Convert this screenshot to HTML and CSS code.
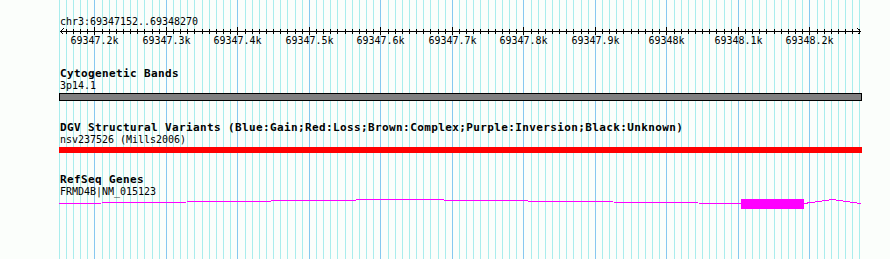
FILE: index.html
```html
<!DOCTYPE html>
<html lang="en">
<head>
  <meta charset="UTF-8">
  <title>chr3:69347152..69348270</title>
  <link rel="stylesheet" href="styles.css">
</head>
<body>

  <div class="view">
    <!-- grid behind every track -->
    <svg class="grid" id="grid" width="890" height="259"></svg>

    <div class="tracks">
      <div class="locus">chr3:69347152..69348270</div>
      <svg class="ruler" id="ruler" width="890" height="19"></svg>

      <div class="track">
        <div class="track-title">Cytogenetic Bands</div>
        <div class="feature-label">3p14.1</div>
        <div class="band"></div>
      </div>

      <div class="track">
        <div class="track-title">DGV Structural Variants (Blue:Gain;Red:Loss;Brown:Complex;Purple:Inversion;Black:Unknown)</div>
        <div class="feature-label">nsv237526 (Mills2006)</div>
        <div class="variant loss"></div>
      </div>

      <div class="track">
        <div class="track-title">RefSeq Genes</div>
        <div class="feature-label">FRMD4B|NM_015123</div>
        <svg class="gene" width="890" height="12">
          <polyline class="intron" points="59,5.5 400,1.5 741,5.5"></polyline>
          <rect class="exon" x="741" y="1" width="63" height="10"></rect>
          <polyline class="intron" points="804,5.5 832.5,1.5 861,5.5"></polyline>
        </svg>
      </div>
    </div>
  </div>

  <script src="script.js"></script>
</body>
</html>
```

FILE: styles.css
```css
/* Colores de la vista */
:root {
  --bg: #fbfefb;
  --grid-minor: #a9eded;
  --grid-major: #86c8f0;
  --band-fill: #808080;
  --loss: #ff0000;
  --gene: #ff00ff;
}

body {
  margin: 0;
  padding: 0;
  background-color: var(--bg);
  color: #000;
  font-family: "DejaVu Sans Mono", "Liberation Mono", monospace;
}

.view {
  position: relative;
  width: 890px;
  height: 259px;
  overflow: hidden;
}

/* Rejilla de fondo */
.grid {
  position: absolute;
  top: 0;
  left: 0;
  z-index: 0;
}

.grid .minor {
  fill: var(--grid-minor);
}

.grid .major {
  fill: var(--grid-major);
}

.tracks {
  position: relative;
  z-index: 1;
  padding-top: 16px;
}

.locus,
.feature-label {
  padding-left: 60px;
  font-size: 10px;
  line-height: 12px;
  letter-spacing: -0.02px;
  white-space: nowrap;
}

/* Regla con marcas */
.ruler {
  display: block;
  overflow: visible;
}

.ruler rect {
  fill: #000;
}

.ruler text {
  font-family: "DejaVu Sans Mono", "Liberation Mono", monospace;
  font-size: 10px;
  fill: #000;
  text-anchor: middle;
}

.track {
  margin-top: 21px;
}

.track-title {
  padding-left: 60px;
  font-size: 11px;
  font-weight: bold;
  line-height: 12px;
  letter-spacing: 0.38px;
  white-space: nowrap;
}

.band {
  box-sizing: border-box;
  margin: 1px 0 0 59px;
  width: 803px;
  height: 8px;
  background-color: var(--band-fill);
  border: 1px solid #000;
}

.variant {
  margin: 1px 0 0 59px;
  width: 803px;
  height: 6px;
}

.variant.loss {
  background-color: var(--loss);
}

.gene {
  display: block;
  shape-rendering: crispEdges;
}

.gene .intron {
  fill: none;
  stroke: var(--gene);
  stroke-width: 1;
}

.gene .exon {
  fill: var(--gene);
}
```

FILE: script.js
```js
// Escala de la vista: pares de bases a pixeles
const START = 69347152;
const END = 69348270;

function xOf(bp) {
  return Math.round(94.35 + (bp - 69347200) * 0.715);
}

const NS = 'http://www.w3.org/2000/svg';

function rect(parent, x, y, w, h, cls) {
  const r = document.createElementNS(NS, 'rect');
  r.setAttribute('x', x);
  r.setAttribute('y', y);
  r.setAttribute('width', w);
  r.setAttribute('height', h);
  if (cls) r.setAttribute('class', cls);
  parent.appendChild(r);
}

const grid = document.getElementById('grid');
const ruler = document.getElementById('ruler');

// Lineas cada 10 pb, mas oscuras cada 100 pb
for (let bp = Math.floor(START / 10) * 10; bp <= END; bp += 10) {
  const x = xOf(bp);
  const major = bp % 100 === 0;
  rect(grid, x, 0, 1, 259, major ? 'major' : 'minor');

  if (x > 60 && x < 860) {
    if (major) {
      rect(ruler, x, -1, 1, 8);
    } else {
      rect(ruler, x, 1, 1, 5);
    }
  }

  if (major) {
    const label = document.createElementNS(NS, 'text');
    label.setAttribute('x', x + 0.5);
    label.setAttribute('y', 16);
    const kb = (bp / 1000).toFixed(1).replace(/\.0$/, '');
    label.textContent = kb + 'k';
    ruler.appendChild(label);
  }
}

// Linea de la regla con flechas en los extremos
rect(ruler, 60, 3, 801, 1);
const arrows = document.createElementNS(NS, 'path');
arrows.setAttribute('d', 'M63.5 0.5 L60.5 3.5 L63.5 6.5 M857.5 0.5 L860.5 3.5 L857.5 6.5');
arrows.setAttribute('fill', 'none');
arrows.setAttribute('stroke', '#000');
arrows.setAttribute('shape-rendering', 'crispEdges');
ruler.appendChild(arrows);
```
